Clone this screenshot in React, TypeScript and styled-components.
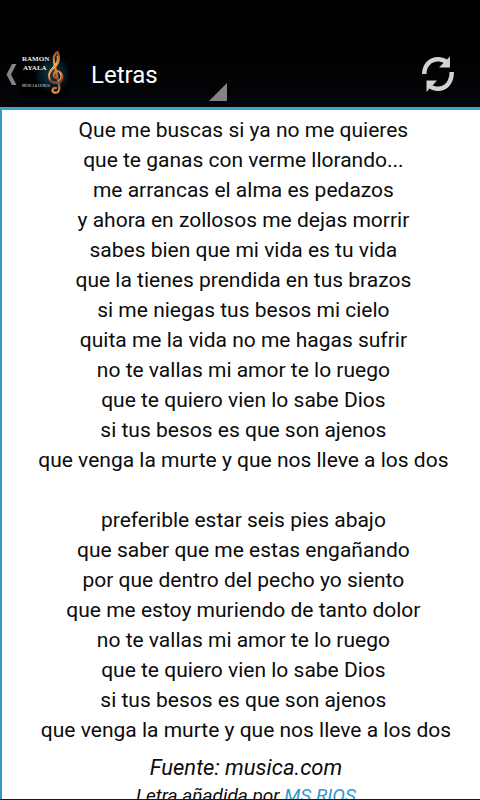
import React from "react";
import styled, { createGlobalStyle } from "styled-components";

const GlobalStyle = createGlobalStyle`
  * { box-sizing: border-box; }
  body { margin: 0; background: #000; font-family: Roboto, "Liberation Sans", sans-serif; }
`;

const Screen = styled.div`
  display: flex;
  flex-direction: column;
  height: 100vh;
  overflow: hidden;
  border-bottom: 1px solid #15181c;
`;

const StatusBar = styled.div`
  flex: none;
  height: 38px;
  background: #000;
`;

const ActionBar = styled.header`
  flex: none;
  display: flex;
  align-items: center;
  height: 72px;
  padding: 4px 25px 0 4px;
  background: linear-gradient(#000, #030508);
  border-bottom: 3px solid #3ba6d0;
`;

const PlainButton = styled.button`
  display: flex;
  align-items: center;
  padding: 0;
  border: 0;
  background: none;
  color: #fff;
  font: inherit;
  cursor: pointer;
`;

const HomeButton = styled(PlainButton)`
  gap: 2px;
`;

const SectionPicker = styled(PlainButton)`
  align-self: stretch;
  justify-content: space-between;
  width: 136px;
  margin-left: 21px;
  font-size: 24px;
  line-height: 32px;
`;

const PickerCorner = styled.span`
  align-self: flex-end;
  margin-bottom: 6px;
  border-left: 18px solid transparent;
  border-bottom: 18px solid #838383;
`;

const RefreshButton = styled(PlainButton)`
  margin-left: auto;
`;

const Lyrics = styled.main`
  flex: 1;
  min-height: 0;
  overflow: hidden;
  padding: 5px 0 0 10px;
  border-left: 2px solid #3498c8;
  background: #fff;
  color: #0c0c0c;
  font-size: 21px;
  line-height: 30px;
  text-align: center;
`;

const Stanza = styled.p`
  margin: 0 0 30px;
  white-space: pre;
`;

const LastStanza = styled(Stanza)`
  margin-bottom: 8px;
`;

const Credit = styled.p<{ $small?: boolean }>`
  margin: 0;
  font-style: italic;
  font-size: ${(p) => (p.$small ? 19 : 22)}px;
  line-height: ${(p) => (p.$small ? 26 : 30)}px;
`;

const AuthorLink = styled.a`
  color: #3399cc;
  text-decoration: none;
`;

const first = [
  "Que me buscas si ya no me quieres",
  "que te ganas con verme llorando...",
  "me arrancas el alma es pedazos",
  "y ahora en zollosos me dejas morrir",
  "sabes bien que mi vida es tu vida",
  "que la tienes prendida en tus brazos",
  "si me niegas tus besos mi cielo",
  "quita me la vida no me hagas sufrir",
  "no te vallas mi amor te lo ruego",
  "que te quiero vien lo sabe Dios",
  "si tus besos es que son ajenos",
  "que venga la murte y que nos lleve a los dos",
];

const second = [
  "preferible estar seis pies abajo",
  "que saber que me estas engañando",
  "por que dentro del pecho yo siento",
  "que me estoy muriendo de tanto dolor",
  "no te vallas mi amor te lo ruego",
  "que te quiero vien lo sabe Dios",
  "si tus besos es que son ajenos",
  "que venga la murte y que nos lleve a los dos",
];

// Every verse but the closing one ends in a non-breaking space.
const verses = (lines: string[]) => lines.join("\u00a0\n");

function BackArrow() {
  return (
    <svg width="14" height="24" viewBox="0 0 14 24" aria-hidden="true">
      <path d="M8 1H12.5L7 11.500L12.5 22H8L2.5 11.500Z" fill="#858585" />
    </svg>
  );
}

function AppLogo() {
  return (
    <svg width="50" height="50" viewBox="0 0 50 50" role="img" aria-label="Ramon Ayala">
      <defs>
        <radialGradient id="glow" cx="0.68" cy="0.5" r="0.4">
          <stop offset="0" stopColor="#0c3b45" />
          <stop offset="0.6" stopColor="#061e26" />
          <stop offset="1" stopColor="#000" />
        </radialGradient>
        <linearGradient id="fire" x1="0" y1="0" x2="0" y2="1">
          <stop offset="0" stopColor="#b04a18" />
          <stop offset="0.3" stopColor="#f0a04a" />
          <stop offset="0.5" stopColor="#d87a38" />
          <stop offset="0.7" stopColor="#8a3f28" />
          <stop offset="1" stopColor="#e49a4c" />
        </linearGradient>
      </defs>
      <rect width="48" height="48" rx="3" fill="url(#glow)" />
      <g fill="#eceef0" fontFamily='"Liberation Serif", serif' fontWeight="700">
        <text x="2" y="11" fontSize="7">RAMON</text>
        <text x="3" y="20" fontSize="7">AYALA</text>
        <text x="2" y="37" fontSize="3" fill="#b8bcc0">MÚSICA &amp; LETRAS</text>
      </g>
      <g fill="none" stroke="url(#fire)" strokeLinecap="round" strokeLinejoin="round">
        <path
          strokeWidth="2.2"
          d="M36 38C33 37 31 41 34 42.500C38 43.500 40 41 39 35L34 12C33 7 35 3 37.500 2C40 7 39 13 35 17C30 21 28 24 29 28C31 34 40 34 42 29C43 24 40 21 37 21C33 22 33 27 36 28"
        />
        <path strokeWidth="1" stroke="#ffd08a" d="M37 6C38 10 37 13 33 17C29 21 28 25 30 29M40 23C42 26 41 30 38 31" />
      </g>
    </svg>
  );
}

function RefreshIcon() {
  return (
    <svg width="34" height="38" viewBox="0 0 34 38" fill="#d2d2d2" aria-hidden="true">
      <path d="M1 18C1 8 8 1 17 1C20.500 1 23.500 2 26 3.500L29 0.500V11.500H18L22.500 7C21 6 19 5.500 17 5.500C10 5.500 5.500 11 5.500 18Z" />
      <path d="M33 16C33 28 26 35 17 35C13.500 35 10.500 34 8.500 32.500L5.500 36V24.500H16L11.500 29.500C13 30 15 30.500 17 30.500C24 30.500 28.500 25 28.500 16Z" />
    </svg>
  );
}

export default function App() {
  return (
    <>
      <GlobalStyle />
      <Screen>
        <StatusBar />
        <ActionBar>
          <HomeButton aria-label="Volver">
            <BackArrow />
            <AppLogo />
          </HomeButton>
          <SectionPicker aria-haspopup="listbox">
            Letras
            <PickerCorner />
          </SectionPicker>
          <RefreshButton aria-label="Actualizar">
            <RefreshIcon />
          </RefreshButton>
        </ActionBar>
        <Lyrics>
          <Stanza>{verses(first) + "\u00a0"}</Stanza>
          <LastStanza>{verses(second)}</LastStanza>
          <Credit>Fuente: musica.com</Credit>
          <Credit $small>
            Letra añadida por <AuthorLink href="#ms-rios">MS RIOS</AuthorLink>
          </Credit>
        </Lyrics>
      </Screen>
    </>
  );
}
